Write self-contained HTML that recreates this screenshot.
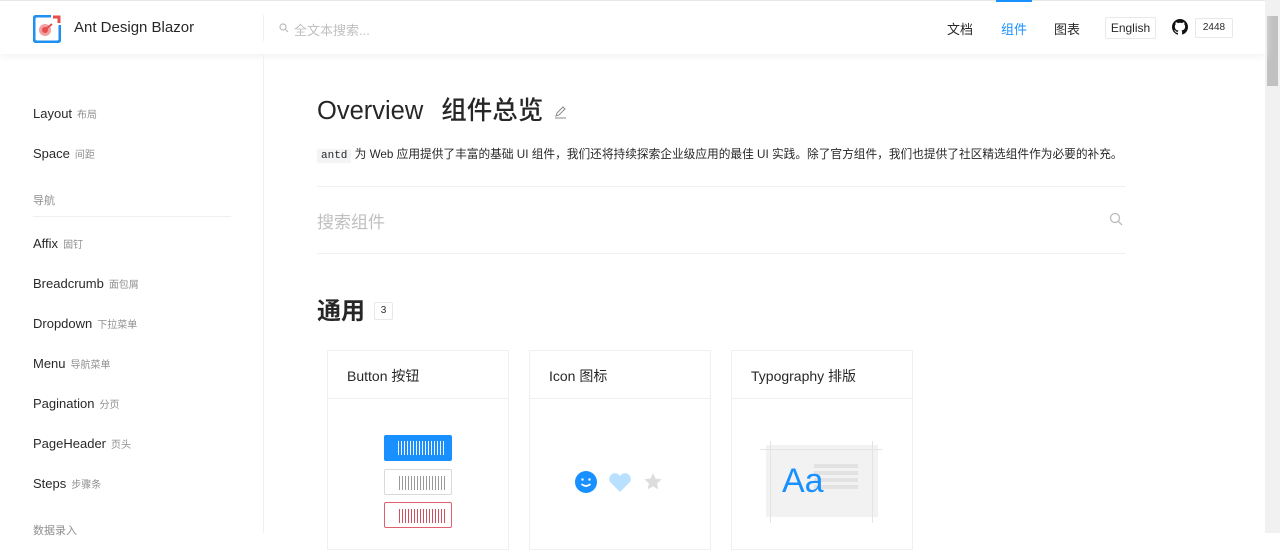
<!DOCTYPE html>
<html><head><meta charset="utf-8"><style>
*{margin:0;padding:0;box-sizing:border-box}
body{width:1280px;height:533px;overflow:hidden;background:#fff;font-family:"Liberation Sans","Noto Sans CJK SC",sans-serif;color:rgba(0,0,0,.85);position:relative}
.hdr{position:absolute;left:0;top:0;width:1265px;height:54px;background:#fff;box-shadow:0 2px 8px rgba(240,241,242,1);border-top:1px solid #e8e8e8;z-index:2}
.abs{position:absolute}
.sb{position:absolute;right:0;top:0;width:15px;height:533px;background:#f1f1f1}
.sb div{position:absolute;left:2px;top:16px;width:11px;height:70px;background:#c1c1c1}
.side{position:absolute;left:0;top:54px;width:264px;height:479px;border-right:1px solid #f0f0f0}
.it{position:absolute;left:33px;font-size:13px;color:rgba(0,0,0,.85)}
.it span{font-size:10px;color:rgba(0,0,0,.45);margin-left:5px}
.grp{position:absolute;left:33px;font-size:11px;color:rgba(0,0,0,.45)}
.card{position:absolute;top:350px;width:182px;height:200px;border:1px solid #f0f0f0}
.card .t{height:48px;border-bottom:1px solid #f0f0f0;padding:16px 19px;font-size:14px;line-height:18px}
.btn{position:absolute;left:56px;width:68px;height:26px;border-radius:2px;background-image:repeating-linear-gradient(90deg,currentColor 0 1px,transparent 1px 3px);background-size:48px 14px;background-repeat:no-repeat;background-position:14px 6px}
</style></head><body>
<div class="hdr">
 <svg class="abs" style="left:33px;top:14px" width="28" height="28" viewBox="0 0 28 28"><rect x="1" y="1" width="26" height="26" rx="3" fill="none" stroke="#1f8ff0" stroke-width="3"/><rect x="18" y="0" width="10" height="10" fill="#fff"/><path d="M20 2h6v6" stroke="#e84c4c" stroke-width="3" fill="none"/><circle cx="12" cy="15" r="6" fill="#f0a0a0"/><circle cx="12" cy="15" r="3" fill="#e84c4c"/><path d="M13 14l6-5" stroke="#e84c4c" stroke-width="2"/></svg>
 <div class="abs" style="left:74px;top:18px;font-size:15px;color:rgba(0,0,0,.85)">Ant Design Blazor</div>
 <div class="abs" style="left:263px;top:14px;width:1px;height:26px;background:#f0f0f0"></div>
 <svg class="abs" style="left:279px;top:22px" width="10" height="10" viewBox="0 0 10 10"><circle cx="4" cy="4" r="3" fill="none" stroke="#bbb" stroke-width="1.2"/><path d="M6.5 6.5L9 9" stroke="#bbb" stroke-width="1.2"/></svg>
 <div class="abs" style="left:294px;top:19px;font-size:13px;color:#bfbfbf">全文本搜索...</div>
 <div class="abs" style="left:947px;top:18px;font-size:13px">文档</div>
 <div class="abs" style="left:996px;top:-1px;width:36px;height:2px;background:#1890ff"></div>
 <div class="abs" style="left:1001px;top:18px;font-size:13px;color:#1890ff">组件</div>
 <div class="abs" style="left:1054px;top:18px;font-size:13px">图表</div>
 <div class="abs" style="left:1105px;top:16px;width:51px;height:22px;border:1px solid #e8e8e8;border-radius:2px;font-size:12px;line-height:20px;text-align:center">English</div>
 <svg class="abs" style="left:1172px;top:18px" width="16" height="16" viewBox="0 0 16 16"><path fill="#111" d="M8 0C3.6 0 0 3.6 0 8c0 3.5 2.3 6.5 5.5 7.6.4.1.5-.2.5-.4v-1.4c-2.2.5-2.7-1-2.7-1-.4-.9-.9-1.2-.9-1.2-.7-.5.1-.5.1-.5.8.1 1.2.8 1.2.8.7 1.300 1.9.9 2.3.7.1-.5.3-.9.5-1.1-1.8-.2-3.6-.9-3.6-4 0-.9.3-1.6.8-2.1-.1-.2-.4-1 .1-2.1 0 0 .7-.2 2.2.8.6-.2 1.3-.3 2-.3s1.4.1 2 .3c1.5-1 2.2-.8 2.2-.8.4 1.1.2 1.9.1 2.1.5.6.8 1.3.8 2.1 0 3.1-1.9 3.700-3.6 3.9.3.3.6.8.6 1.5v2.2c0 .2.1.5.6.4C13.7 14.5 16 11.5 16 8c0-4.400-3.600-8-8-8z"/></svg>
 <div class="abs" style="left:1195px;top:17px;width:38px;height:20px;border:1px solid #e8e8e8;border-radius:2px;font-size:10px;line-height:18px;text-align:center">2448</div>
</div>
<div class="sb"><div></div></div>
<div class="side">
 <div class="it" style="top:52px">Layout<span>布局</span></div>
 <div class="it" style="top:92px">Space<span>间距</span></div>
 <div class="grp" style="top:138px">导航</div>
 <div class="abs" style="left:33px;top:162px;width:198px;height:1px;background:#f0f0f0"></div>
 <div class="it" style="top:182px">Affix<span>固钉</span></div>
 <div class="it" style="top:222px">Breadcrumb<span>面包屑</span></div>
 <div class="it" style="top:262px">Dropdown<span>下拉菜单</span></div>
 <div class="it" style="top:302px">Menu<span>导航菜单</span></div>
 <div class="it" style="top:342px">Pagination<span>分页</span></div>
 <div class="it" style="top:382px">PageHeader<span>页头</span></div>
 <div class="it" style="top:422px">Steps<span>步骤条</span></div>
 <div class="grp" style="top:468px">数据录入</div>
</div>
<div class="abs" style="left:317px;top:95px;font-size:25.5px;line-height:32px;font-weight:500;white-space:nowrap">Overview<span style="margin-left:18px">组件总览</span></div>
<svg class="abs" style="left:554px;top:106px" width="13" height="13" viewBox="0 0 13 13"><path d="M2 10l1-3 6-6 2 2-6 6z M1 12h11" fill="none" stroke="#888" stroke-width="1"/></svg>
<div class="abs" style="left:317px;top:146px;font-size:11.7px;line-height:18px;white-space:nowrap"><span style="font-family:'Liberation Mono',monospace;font-size:11px;background:#f2f4f5;padding:1px 4px;border-radius:2px">antd</span> 为 Web 应用提供了丰富的基础 UI 组件，我们还将持续探索企业级应用的最佳 UI 实践。除了官方组件，我们也提供了社区精选组件作为必要的补充。</div>
<div class="abs" style="left:317px;top:186px;width:809px;height:1px;background:#f0f0f0"></div>
<div class="abs" style="left:317px;top:208px;font-size:17px;color:#bfbfbf">搜索组件</div>
<svg class="abs" style="left:1109px;top:212px" width="14" height="14" viewBox="0 0 14 14"><circle cx="6" cy="6" r="4.5" fill="none" stroke="#bbb" stroke-width="1.3"/><path d="M9.3 9.3L13 13" stroke="#bbb" stroke-width="1.3"/></svg>
<div class="abs" style="left:317px;top:253px;width:809px;height:1px;background:#f0f0f0"></div>
<div class="abs" style="left:317px;top:296px;font-size:24px;font-weight:bold;line-height:32px">通用</div>
<div class="abs" style="left:374px;top:302px;width:19px;height:18px;border:1px solid #e8e8e8;border-radius:2px;font-size:10px;line-height:16px;text-align:center">3</div>
<div class="card" style="left:327px"><div class="t">Button 按钮</div>
 <div class="btn" style="top:84px;background-color:#1890ff;color:#fff"></div>
 <div class="btn" style="top:118px;border:1px solid #d9d9d9;color:#999"></div>
 <div class="btn" style="top:151px;border:1px solid #e06070;color:#d05060"></div>
</div>
<div class="card" style="left:529px"><div class="t">Icon 图标</div>
 <svg class="abs" style="left:44px;top:119px" width="90" height="24" viewBox="0 0 90 24"><circle cx="12" cy="12" r="11" fill="#1890ff"/><circle cx="8.5" cy="9.5" r="1.2" fill="#fff"/><circle cx="15.5" cy="9.5" r="1.2" fill="#fff"/><path d="M7.5 14q4.5 4 9 0" stroke="#fff" stroke-width="1.6" fill="none"/><path d="M46 22L36 12a5.5 5.5 0 0 1 10-6a5.5 5.5 0 0 1 10 6z" fill="#bae0ff"/><path d="M79 3l2.6 5.6 6 .7-4.5 4.1 1.2 6L79 16.4 73.7 19.4l1.2-6-4.5-4.1 6-.7z" fill="#ddd"/></svg>
</div>
<div class="card" style="left:731px"><div class="t">Typography 排版</div>
 <div class="abs" style="left:34px;top:94px;width:112px;height:72px;background:#f2f2f2"></div>
 <div class="abs" style="left:28px;top:98px;width:122px;height:1px;background:#e4e4e4"></div>
 <div class="abs" style="left:38px;top:90px;width:1px;height:82px;background:#e4e4e4"></div>
 <div class="abs" style="left:140px;top:90px;width:1px;height:82px;background:#e4e4e4"></div>
 <div class="abs" style="left:82px;top:113px;width:44px;height:28px;background:repeating-linear-gradient(180deg,#e2e2e2 0 4px,transparent 4px 7px)"></div>
 <div class="abs" style="left:50px;top:110px;font-size:34px;color:#1890ff;line-height:40px">Aa</div>
</div>
</body></html>
